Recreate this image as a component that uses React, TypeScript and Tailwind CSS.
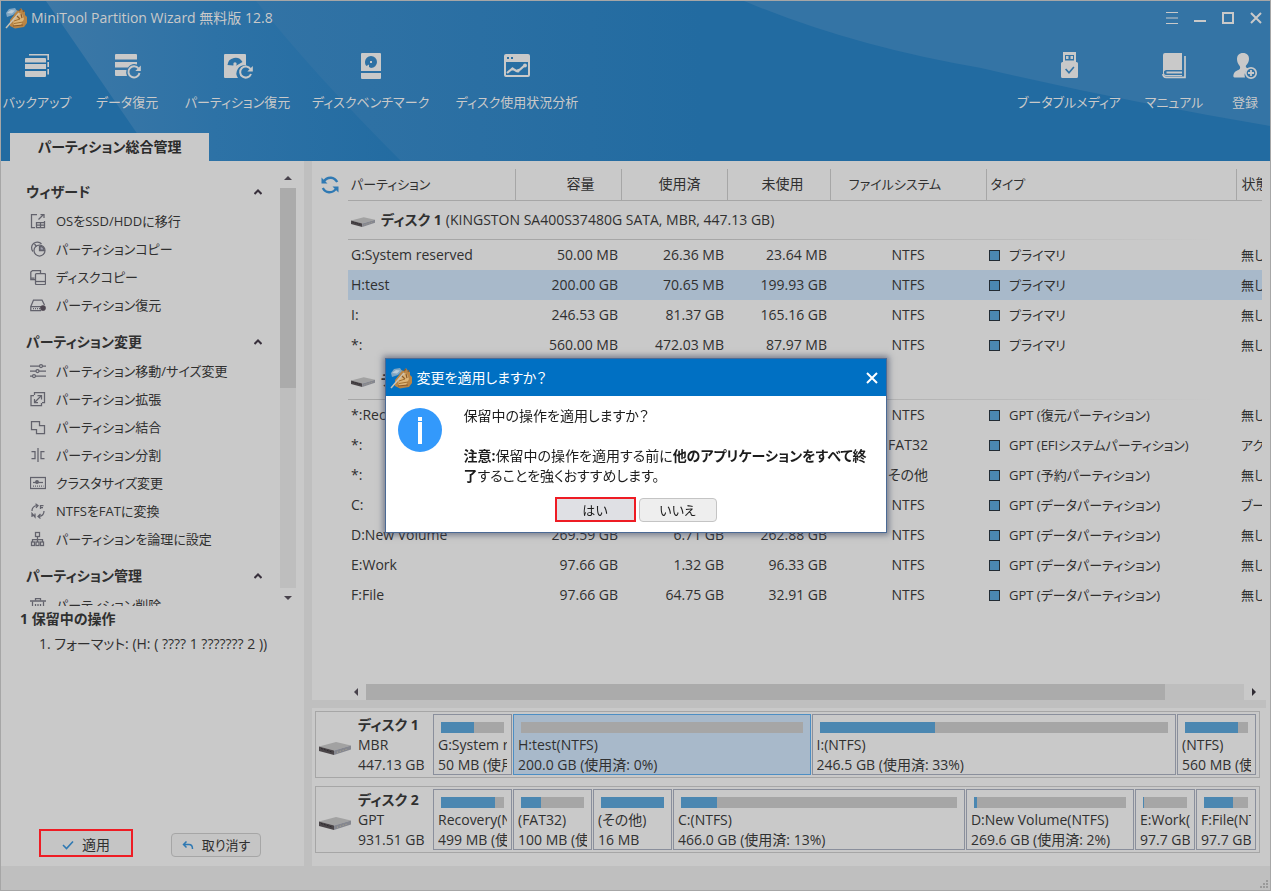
import React from "react";

type IconName =
  | "migrate" | "pie" | "diskcopy" | "recover" | "sliders" | "extend" | "merge"
  | "split" | "cluster" | "convert" | "logical" | "trash";

const sideIcons: Record<IconName, React.ReactNode> = {
  migrate: (
    <>
      <path d="M7 1.500H1.500v13H5M14.500 8v6.500H6.500V9.500h8M10.500 9.500v5M6.500 12h8M8.500 6.500l5-5" />
      <path d="M10.500 1.500h3.500V5" />
    </>
  ),
  pie: (
    <>
      <circle cx="9.500" cy="9.500" r="5.500" />
      <path d="M3 10.500A5 5 0 1 1 11.500 3M9.500 5v4.500H15M4.500 3l2 2.500" />
      <path d="M10 5.500A4 4 0 0 1 14 9h-4z" fill="#a3a3b0" />
    </>
  ),
  diskcopy: (
    <>
      <path d="M10.500 4V1.500h-8L.8 3v7.500H5M1 9h3.500" />
      <rect x="5.500" y="4.500" width="10" height="11" rx="1" />
      <path d="M5.500 12.500h10" />
    </>
  ),
  recover: (
    <>
      <path d="M.8 9.500L3.500 3h8.500l2.500 5M.8 9v4.500H11M.8 9.500h11" />
      <path d="M3 11.500h7" strokeDasharray="1 1" />
      <circle cx="13" cy="11" r="2.200" fill="#4e4650" stroke="#4e4650" />
    </>
  ),
  sliders: (
    <>
      <path d="M0 3h9.500M12.500 3H16M0 8h6M9 8h7M0 13h2.500M5.500 13H16" />
      <circle cx="11" cy="3" r="1.500" />
      <circle cx="7.500" cy="8" r="1.500" />
      <circle cx="4" cy="13" r="1.500" />
    </>
  ),
  extend: (
    <>
      <path d="M4.500 4V1.500h10v10H12M4 4.500H1v10h10.500V12M5 11l6-6" />
      <path d="M7.500 4.500h4v4M4.500 8v3.500H8" />
    </>
  ),
  merge: <path d="M1.500 2.500h8v4h5v8h-8v-4h-5z" />,
  split: <path d="M8 1v14M1.500 4.500H5v7H1.500M14.500 4.500H11v7h3.500" />,
  cluster: (
    <>
      <rect x=".5" y="2.500" width="15" height="11" />
      <path d="M3 7.500h10" />
      <path d="M3 11h10.500" strokeDasharray="1 1" />
      <circle cx="7" cy="7" r="1.300" fill="#66666f" />
    </>
  ),
  convert: (
    <>
      <path d="M2 8c0-3 1.500-5 5-5.500M5.500.8L8 2.500 6 4.800M14 8c0 3-1.500 5-5 5.500M10.500 11L8 13.500l2.500 2" />
      <path d="M10.500 6V2.500h3M10.500 4.500h2.500M2 14v-3.500l3 3.500v-3.500" />
    </>
  ),
  logical: (
    <>
      <rect x="5.500" y="1.500" width="4" height="4" />
      <path d="M7.500 6v5M2.500 11V8.500h10V11" />
      <rect x="1.500" y="11" width="3" height="3.500" />
      <rect x="6" y="11" width="3" height="3.500" />
      <rect x="10.500" y="11" width="3" height="3.500" />
    </>
  ),
  trash: (
    <>
      <path d="M0 4h16" strokeWidth="1.500" />
      <path d="M5.500 3.500V1.500h5v2M2.500 4.500V15h11V4.500M5.500 7v5M8 7v5M10.500 7v5" />
    </>
  ),
};

function SideIcon({ name }: { name: IconName }) {
  return (
    <svg viewBox="0 0 16 16" className="size-4 shrink-0" fill="none" stroke="#62626c" strokeWidth="1.250" aria-hidden="true">
      {sideIcons[name]}
    </svg>
  );
}

const sections: { title: string; items: [IconName, string][] }[] = [
  {
    title: "ウィザード",
    items: [
      ["migrate", "OSをSSD/HDDに移行"],
      ["pie", "パーティションコピー"],
      ["diskcopy", "ディスクコピー"],
      ["recover", "パーティション復元"],
    ],
  },
  {
    title: "パーティション変更",
    items: [
      ["sliders", "パーティション移動/サイズ変更"],
      ["extend", "パーティション拡張"],
      ["merge", "パーティション結合"],
      ["split", "パーティション分割"],
      ["cluster", "クラスタサイズ変更"],
      ["convert", "NTFSをFATに変換"],
      ["logical", "パーティションを論理に設定"],
    ],
  },
  { title: "パーティション管理", items: [["trash", "パーティション削除"]] },
];

type Row = [string, string, string, string, string, string, string];

const disk1: Row[] = [
  ["G:System reserved", "50.00 MB", "26.36 MB", "23.64 MB", "NTFS", "プライマリ", "無し"],
  ["H:test", "200.00 GB", "70.65 MB", "199.93 GB", "NTFS", "プライマリ", "無し"],
  ["I:", "246.53 GB", "81.37 GB", "165.16 GB", "NTFS", "プライマリ", "無し"],
  ["*:", "560.00 MB", "472.03 MB", "87.97 MB", "NTFS", "プライマリ", "無し"],
];

const disk2: Row[] = [
  ["*:Recovery", "499.00 MB", "433.00 MB", "66.00 MB", "NTFS", "GPT (復元パーティション)", "無し"],
  ["*:", "100.00 MB", "32.00 MB", "68.00 MB", "FAT32", "GPT (EFIシステムパーティション)", "アクティブ"],
  ["*:", "16.00 MB", "16.00 MB", "0 B", "その他", "GPT (予約パーティション)", "無し"],
  ["C:", "466.00 GB", "60.00 GB", "406.00 GB", "NTFS", "GPT (データパーティション)", "ブート"],
  ["D:New Volume", "269.59 GB", "6.71 GB", "262.88 GB", "NTFS", "GPT (データパーティション)", "無し"],
  ["E:Work", "97.66 GB", "1.32 GB", "96.33 GB", "NTFS", "GPT (データパーティション)", "無し"],
  ["F:File", "97.66 GB", "64.75 GB", "32.91 GB", "NTFS", "GPT (データパーティション)", "無し"],
];

function DiskIcon({ className }: { className: string }) {
  return (
    <svg viewBox="0 0 32 13" className={className} aria-hidden="true">
      <path d="M0 4.500L17 0l15 3.500-17 5z" fill="#a2a2a2" />
      <path d="M0 4.500l15 4V13L0 9z" fill="#4a4548" />
      <path d="M15 8.500l17-5v4L15 13z" fill="#85878f" />
      <path d="M2 6.500l11 3.500" stroke="#2f2c30" strokeWidth="1" strokeDasharray="2 1" />
      <path d="M18 10.300l11-3.500" stroke="#b0a890" strokeWidth="1" strokeDasharray="1 2" />
    </svg>
  );
}

function Logo({ className }: { className: string }) {
  return (
    <svg viewBox="0 0 22 22" className={className} aria-hidden="true">
      <path d="M5 13l4-5 2-5 3 1 2-3 2 3 2 1v3l2 2v6l-3 4-9 1.500-5-2.500z" fill="#b98545" />
      <path d="M8 12l4-4 2-2 3 1 2 5-3 6-7 1z" fill="#dcb477" />
      <path d="M1 6l3-4 6-1 2 3-4 4-6 2z" fill="#7fa6c4" />
      <path d="M2 6l4-3 4 .5-3 3z" fill="#b8cbd9" />
      <path d="M1 21L14 6" stroke="#c9c2b4" strokeWidth="1.500" />
      <path d="M14 4l2-2M18 5l1-2M8 19l10-1M12 9l3 3M16 7l1 4" stroke="#8a5a2b" strokeWidth="1.200" />
      <path d="M9 14l6-2M9 16.500l9-1.500" stroke="#a3702f" strokeWidth="1" />
    </svg>
  );
}

const tools: { label: string; box: string; icon: React.ReactNode }[] = [
  {
    label: "バックアップ",
    box: "w-16",
    icon: (
      <>
        <path d="M4 8h19a1 1 0 0 1 1 1v3.500H3V9a1 1 0 0 1 1-1zM3 14h21v5H3zM3 21h21v5a1 1 0 0 1-1 1H4a1 1 0 0 1-1-1z" transform="translate(1 -1)" />
        <path d="M8 3.700h19.200V9M27.200 11v5M27.200 18v5.500" fill="none" stroke="#c9c9c9" strokeWidth="1.600" />
      </>
    ),
  },
  {
    label: "データ復元",
    box: "w-[66px]",
    icon: (
      <>
        <path d="M5 3h20a1 1 0 0 1 1 1v4.500H4V4a1 1 0 0 1 1-1zM4 11h22v2.500a8 8 0 0 0-9 3H4zM4 19h11.500a8 8 0 0 0 .5 6H5a1 1 0 0 1-1-1z" />
        <path d="M27.500 17.500A5.600 5.600 0 1 0 28.500 22" fill="none" stroke="#c9c9c9" strokeWidth="2" />
        <path d="M29.800 14.500V20h-5.500z" />
      </>
    ),
  },
  {
    label: "パーティション復元",
    box: "w-[105px]",
    icon: (
      <>
        <path fillRule="evenodd" d="M3 3h20a1 1 0 0 1 1 1v10.500a8 8 0 0 0-8 12.500H3a1 1 0 0 1-1-1V4a1 1 0 0 1 1-1zM5.500 14a8 8 0 0 1 15-3l-6 3.500a2.500 2.500 0 0 0-3.500 0z" />
        <circle cx="13" cy="13" r="1.700" />
        <path d="M28.500 18A5.600 5.600 0 1 0 29 23" fill="none" stroke="#c9c9c9" strokeWidth="2" />
        <path d="M30.800 15v5.500h-5.500z" />
      </>
    ),
  },
  {
    label: "ディスクベンチマーク",
    box: "w-[111px]",
    icon: (
      <>
        <path fillRule="evenodd" d="M7 2h18a1 1 0 0 1 1 1v17H6V3a1 1 0 0 1 1-1zm9 3a6 6 0 0 0-6 6c0 2 .5 3 1.500 4l2.500-1.500V16l2 1a6 6 0 0 0 0-12z" />
        <rect x="15" y="10" width="2" height="2" />
        <path d="M6 22h20v5a1 1 0 0 1-1 1H7a1 1 0 0 1-1-1z" />
      </>
    ),
  },
  {
    label: "ディスク使用状況分析",
    box: "w-[132px]",
    icon: (
      <>
        <path fillRule="evenodd" d="M5 3h22a2 2 0 0 1 2 2v19a2 2 0 0 1-2 2H5a2 2 0 0 1-2-2V5a2 2 0 0 1 2-2zM5 11v13h22V11zM6 6v2h2V6zm4 0v2h2V6z" />
        <path d="M6 22l5.500-4.500 4 2.500 3.500-1.500 5-4.500" fill="none" stroke="#c9c9c9" strokeWidth="2.200" />
        <circle cx="11.500" cy="18" r="1.600" />
        <circle cx="17" cy="20" r="1.600" />
        <circle cx="24" cy="14.500" r="1.900" />
      </>
    ),
  },
];

const rightTools: { label: string; box: string; icon: React.ReactNode }[] = [
  {
    label: "ブータブルメディア",
    box: "w-[98px]",
    icon: (
      <>
        <path fillRule="evenodd" d="M10 1h13v10H10zM12 4v5.500h9V4zM13 5v3h2.500V5zm4.500 0v3H20V5z" />
        <path fillRule="evenodd" d="M8 12.500A1.500 1.500 0 0 1 9.500 11h14a1.500 1.500 0 0 1 1.500 1.500v13a1.500 1.500 0 0 1-1.500 1.500h-14A1.500 1.500 0 0 1 8 25.500zm4 6l4 4.500 5.500-6.500-1.200-1-4.300 5-2.800-3z" />
      </>
    ),
  },
  {
    label: "マニュアル",
    box: "w-14",
    icon: (
      <>
        <path fillRule="evenodd" d="M7 2h17v17H8.500A2.500 2.500 0 0 0 6 20.500V22a2 2 0 0 0 2 2h16v1H8a3 3 0 0 1-3-3V4a2 2 0 0 1 2-2z" />
        <path d="M8.500 20.500H24v2H8.500z" />
        <path d="M27 5v21.300H8A3 3 0 0 1 5 23" fill="none" stroke="#c9c9c9" strokeWidth="1.700" />
      </>
    ),
  },
  {
    label: "登録",
    box: "w-[30px]",
    icon: (
      <>
        <path d="M14 2c4 0 6 2.500 6 6 0 3-1.500 5-3 6.500-.5 1 0 2 1 2.500l2 .5a7 7 0 0 0-4 9H5.500c-1.500 0-1.500-3 0-5 1.500-2 5-2.500 5.500-4 .3-1.200 0-2-.5-2.800C9 13 8 11 8 8c0-3.500 2-6 6-6z" />
        <circle cx="22" cy="22" r="5.200" fill="none" stroke="#c9c9c9" strokeWidth="1.700" />
        <path d="M21.100 19h1.800v2.100H25v1.800h-2.100V25h-1.800v-2.100H19v-1.800h2.100z" />
      </>
    ),
  },
];

function ToolButton({ label, box, icon }: { label: string; box: string; icon: React.ReactNode }) {
  return (
    <button type="button" className={`flex shrink-0 flex-col items-center gap-[7px] ${box}`}>
      <svg viewBox="0 0 32 32" className="size-8 shrink-0" fill="#c9c9c9" aria-hidden="true">
        {icon}
      </svg>
      <span className="whitespace-nowrap text-[13px] leading-6 text-[#c9c9c9]">{label}</span>
    </button>
  );
}

function Header() {
  return (
    <header className="relative flex h-40 shrink-0 flex-col overflow-hidden bg-[#226ba1]">
      <svg className="absolute inset-0 size-full" viewBox="0 0 1269 160" preserveAspectRatio="none" aria-hidden="true">
        <defs>
          <linearGradient id="beam" x1="0" x2="1" y1="0" y2="0">
            <stop offset="0" stopColor="#3d78a6" />
            <stop offset="0.450" stopColor="#2d72a6" />
            <stop offset="1" stopColor="#226ba1" />
          </linearGradient>
          <linearGradient id="beam2" x1="0" x2="1" y1="0" y2="0">
            <stop offset="0" stopColor="#3273a5" />
            <stop offset="1" stopColor="#226ba1" />
          </linearGradient>
        </defs>
        <path d="M45 0H420V160H155z" fill="url(#beam)" />
        <path d="M255 0H700V160H400Q310 70 255 0z" fill="url(#beam2)" />
        <path d="M743 0H1269V125Q1120 100 980 67Q850 45 743 0z" fill="#3474a5" />
      </svg>
      <div className="relative flex h-[33px] items-center pl-1 text-[#c9c9c9]">
        <Logo className="mr-1 size-[22px]" />
        <h1>MiniTool Partition Wizard 無料版 12.8</h1>
        <div className="ml-auto flex items-center">
          {[
            ["メニュー", "M2 2.500h12M2 8h12M2 13.500h12", "1"],
            ["最小化", "M2 11h12", "2"],
            ["最大化", "M3 3h10v10H3z", "2"],
            ["閉じる", "M3 3l10 10M13 3L3 13", "2"],
          ].map(([label, d, w]) => (
            <button key={label} type="button" aria-label={label} className="flex w-7 justify-center">
              <svg viewBox="0 0 16 16" className="size-4" fill="none" stroke="#c9c9c9" strokeWidth={w}>
                <path d={d} />
              </svg>
            </button>
          ))}
        </div>
      </div>
      <nav className="relative flex gap-[25px] pl-1 pr-[10px] pt-[17px]">
        {tools.map((t) => <ToolButton key={t.label} {...t} />)}
        <div className="ml-auto flex gap-[28px]">
          {rightTools.map((t) => <ToolButton key={t.label} {...t} />)}
        </div>
      </nav>
      <button type="button" className="relative ml-[9px] mt-auto h-7 w-[199px] shrink-0 bg-[#c9c9c9] font-bold text-[#2b2b2b]">
        パーティション総合管理
      </button>
    </header>
  );
}

function Sidebar() {
  return (
    <aside className="flex w-[303px] shrink-0 flex-col">
      <div className="flex min-h-0 flex-1">
        <div className="flex min-w-0 flex-1 flex-col gap-2 overflow-hidden pl-[25px] pt-4">
          {sections.map((s) => (
            <section key={s.title} className="shrink-0">
              <button type="button" className="flex h-[30px] w-full items-center justify-between pr-[18px] font-bold">
                {s.title}
                <svg viewBox="0 0 8 6" className="h-[6px] w-2" fill="none" stroke="#38303c" strokeWidth="2" aria-hidden="true">
                  <path d="M.5 5L4 1.500 7.500 5" />
                </svg>
              </button>
              <ul>
                {s.items.map(([icon, label]) => (
                  <li key={label}>
                    <a href="#" className="flex h-7 items-center gap-[10px] whitespace-nowrap pl-1 text-[13px]">
                      <SideIcon name={icon} />
                      {label}
                    </a>
                  </li>
                ))}
              </ul>
            </section>
          ))}
        </div>
        <div className="mr-2 flex w-4 shrink-0 flex-col items-center pb-[6px] pt-[15px]">
          <svg viewBox="0 0 8 4" className="h-1 w-2" fill="#48424c" aria-hidden="true"><path d="M0 4l4-4 4 4z" /></svg>
          <div className="mt-2 w-full flex-1 bg-[#bebebe]">
            <div className="h-1/2 w-full bg-[#ababab]" />
          </div>
          <svg viewBox="0 0 8 4" className="mt-2 h-1 w-2" fill="#48424c" aria-hidden="true"><path d="M0 0l4 4 4-4z" /></svg>
        </div>
      </div>
      <section className="flex h-[260px] shrink-0 flex-col pb-[9px] pl-[19px]">
        <h2 className="font-bold leading-[26px]">1 保留中の操作</h2>
        <p className="pl-[19px] leading-6">1. フォーマット: (H: ( ???? 1 ??????? 2 ))</p>
        <div className="mt-auto flex items-end gap-[38px] pl-[19px]">
          <button type="button" className="flex h-[28px] w-[94px] items-center justify-center gap-2 border-2 border-[#ee1c24] bg-[#c5c5c5] pt-1">
            <svg viewBox="0 0 12 10" className="h-[10px] w-3" fill="none" stroke="#2f79b3" strokeWidth="1.600" aria-hidden="true"><path d="M1 5l3.500 3.500L11 1.500" /></svg>
            適用
          </button>
          <button type="button" className="flex h-6 w-[90px] items-center justify-center gap-2 rounded-sm border border-[#a6a6a6] bg-[#c5c5c5] text-[13px]">
            <svg viewBox="0 0 12 9" className="h-[9px] w-3" fill="none" stroke="#2f79b3" strokeWidth="1.500" aria-hidden="true"><path d="M4.500 0.500L1.500 3.500l3 3M1.500 3.500H7q3.500 0 3.500 4.500" /></svg>
            取り消す
          </button>
        </div>
      </section>
    </aside>
  );
}

function DiskRow({ name, info }: { name: string; info: string }) {
  return (
    <tr className="h-10">
      <th colSpan={7} scope="rowgroup" className="p-0 text-left font-normal">
        <div className="flex h-[38px] items-center pl-[3px]">
          <DiskIcon className="mr-[6px] mt-1 h-[10px] w-6" />
          <b className="mr-1">{name}</b> {info}
        </div>
        <div className="h-px bg-linear-to-r from-[#a6a6a6] from-40% to-transparent to-95%" />
      </th>
    </tr>
  );
}

function PartitionRow({ row, selected }: { row: Row; selected?: boolean }) {
  return (
    <tr className={`h-[30px] whitespace-nowrap ${selected ? "bg-[#a8b9ca]" : ""}`}>
      <td className="pl-[3px]">{row[0]}</td>
      <td className="pr-[3px] text-right">{row[1]}</td>
      <td className="pr-[3px] text-right">{row[2]}</td>
      <td className="pr-[3px] text-right">{row[3]}</td>
      <td className="text-center">{row[4]}</td>
      <td className="pl-[3px] text-[13px]">
        <span className="flex items-center">
          <i className="mr-[9px] size-[11px] border border-[#222b33] bg-[#4b87b1]" />
          {row[5]}
        </span>
      </td>
      <td className="overflow-hidden pl-[5px] text-[13px]">{row[6]}</td>
    </tr>
  );
}

function PartitionTable() {
  const cell = "border-r border-[#a6a6a6]";
  return (
    <div className="flex min-h-0 flex-1 flex-col pr-2">
      <div className="flex min-h-0 flex-1 overflow-hidden pt-2">
        <button type="button" aria-label="更新" className="flex h-8 w-9 shrink-0 items-center justify-center">
          <svg viewBox="0 0 20 18" className="h-[18px] w-5" fill="none" stroke="#2f79b3" strokeWidth="2.400" aria-hidden="true">
            <path d="M3 6.500Q6 1.500 11 1.700q4 .3 6.200 4.300M17 11.500Q14 16.500 9 16.300 5 16 2.800 12" />
            <path d="M1.500 1.500v6h6zM18.500 16.500v-6h-6z" fill="#2f79b3" stroke="none" />
          </svg>
        </button>
        <div className="min-w-0 flex-1">
          <table className="w-full table-fixed border-collapse leading-5">
            <colgroup>
              <col className="w-[167px]" />
              <col className="w-[106px]" />
              <col className="w-[106px]" />
              <col className="w-[103px]" />
              <col className="w-[156px]" />
              <col />
              <col className="w-[26px]" />
            </colgroup>
            <thead>
              <tr className="h-[31px] whitespace-nowrap border-b border-[#a6a6a6] [&>th]:font-normal">
                <th className={`${cell} pl-[3px] text-left text-[13px]`}>パーティション</th>
                <th className={`${cell} pr-[26px] text-right`}>容量</th>
                <th className={`${cell} pr-[26px] text-right`}>使用済</th>
                <th className={`${cell} pr-[26px] text-right`}>未使用</th>
                <th className={`${cell} pr-[26px] text-[13px]`}>ファイルシステム</th>
                <th className={`${cell} pl-1 text-left text-[13px]`}>タイプ</th>
                <th className="overflow-hidden pl-[5px] text-left">状態</th>
              </tr>
            </thead>
            <tbody>
              <DiskRow name="ディスク 1" info="(KINGSTON SA400S37480G SATA, MBR, 447.13 GB)" />
              {disk1.map((r, i) => <PartitionRow key={i} row={r} selected={i === 1} />)}
            </tbody>
            <tbody>
              <DiskRow name="ディスク 2" info="(ST1000DM010-2EP102 SATA, GPT, 931.51 GB)" />
              {disk2.map((r, i) => <PartitionRow key={i} row={r} />)}
            </tbody>
          </table>
        </div>
      </div>
      <div className="flex h-4 shrink-0 items-center pl-[42px] pr-[6px]">
        <svg viewBox="0 0 4 8" className="h-2 w-1" fill="#48424c" aria-hidden="true"><path d="M4 0L0 4l4 4z" /></svg>
        <div className="mx-2 h-full flex-1 bg-[#bebebe]">
          <div className="h-full w-[91%] bg-[#ababab]" />
        </div>
        <svg viewBox="0 0 4 8" className="h-2 w-1" fill="#302c34" aria-hidden="true"><path d="M0 0l4 4-4 4z" /></svg>
      </div>
    </div>
  );
}

type Segment = { name: string; size: string; used: number; box: string; selected?: boolean };

const maps: { name: string; kind: string; total: string; segments: Segment[] }[] = [
  {
    name: "ディスク 1",
    kind: "MBR",
    total: "447.13 GB",
    segments: [
      { name: "G:System reserved(NTFS)", size: "50 MB (使用済: 52%)", used: 52, box: "w-[79px]" },
      { name: "H:test(NTFS)", size: "200.0 GB (使用済: 0%)", used: 0, box: "grow-[297] basis-0", selected: true },
      { name: "I:(NTFS)", size: "246.5 GB (使用済: 33%)", used: 33, box: "grow-[366] basis-0" },
      { name: "(NTFS)", size: "560 MB (使用済: 84%)", used: 84, box: "w-[79px]" },
    ],
  },
  {
    name: "ディスク 2",
    kind: "GPT",
    total: "931.51 GB",
    segments: [
      { name: "Recovery(NTFS)", size: "499 MB (使用済: 86%)", used: 86, box: "w-[79px]" },
      { name: "(FAT32)", size: "100 MB (使用済: 32%)", used: 32, box: "w-[79px]" },
      { name: "(その他)", size: "16 MB", used: 100, box: "w-[79px]" },
      { name: "C:(NTFS)", size: "466.0 GB (使用済: 13%)", used: 13, box: "grow-[296] basis-0" },
      { name: "D:New Volume(NTFS)", size: "269.6 GB (使用済: 2%)", used: 2, box: "grow-[166] basis-0" },
      { name: "E:Work(NTFS)", size: "97.7 GB (使用済: 1%)", used: 1, box: "w-[60px]" },
      { name: "F:File(NTFS)", size: "97.7 GB (使用済: 66%)", used: 66, box: "w-[60px]" },
    ],
  },
];

function DiskMap({ name, kind, total, segments }: (typeof maps)[number]) {
  return (
    <div className="flex h-[67px] border border-[#a6a6a6] py-[2px] pl-[3px] pr-[3px]">
      <div className="flex w-[114px] shrink-0 items-center">
        <DiskIcon className="mr-[7px] mt-[7px] h-[13px] w-8 shrink-0" />
        <div className="whitespace-nowrap leading-5">
          <div className="font-bold">{name}</div>
          <div>{kind}</div>
          <div>{total}</div>
        </div>
      </div>
      <div className="flex min-w-0 flex-1 gap-px">
        {segments.map((s) => (
          <button
            key={s.name}
            type="button"
            className={`flex min-w-0 flex-col overflow-hidden border px-1 pt-[7px] text-left ${s.box} ${s.selected ? "border-[#4c8ec4] bg-[#a8b9ca]" : "border-[#8a8f9c]"}`}
          >
            <span className="mx-[3px] mb-[2px] flex h-[11px] shrink-0 self-stretch bg-[#a6a6a6]">
              <span className="bg-[#4b87b1]" style={{ width: `${s.used}%` }} />
            </span>
            <span className="w-full overflow-hidden whitespace-nowrap leading-5">{s.name}</span>
            <span className="w-full overflow-hidden whitespace-nowrap leading-5">{s.size}</span>
          </button>
        ))}
      </div>
    </div>
  );
}

function ApplyDialog() {
  return (
    <div className="fixed inset-0 grid place-items-center">
      <div
        role="dialog"
        aria-modal="true"
        aria-labelledby="apply-title"
        className="w-[502px] border border-[#4b6a95] bg-white pb-[10px] text-[#1c1c1c] shadow-[0_0_6px_2px_rgba(50,60,90,0.55)]"
      >
        <div className="flex h-[37px] items-center bg-[#0070c3] pl-1 pr-2 text-white">
          <Logo className="mr-[5px] size-[22px]" />
          <h2 id="apply-title">変更を適用しますか？</h2>
          <button type="button" aria-label="閉じる" className="ml-auto">
            <svg viewBox="0 0 12 12" className="size-3" fill="none" stroke="#fff" strokeWidth="2"><path d="M1 1l10 10M11 1L1 11" /></svg>
          </button>
        </div>
        <div className="flex pl-3 pt-[10px]">
          <svg viewBox="0 0 44 44" className="mt-[2px] size-11 shrink-0" aria-hidden="true">
            <circle cx="22" cy="22" r="22" fill="#3399fb" />
            <path d="M20 9h4v4h-4zM20 14h4v22h-4z" fill="#fff" />
          </svg>
          <p className="h-[91px] whitespace-nowrap pl-[22px] leading-5">
            保留中の操作を適用しますか？
            <br />
            <br />
            <b>注意:</b>保留中の操作を適用する前に<b>他のアプリケーションをすべて終</b>
            <br />
            <b>了</b>することを強くおすすめします。
          </p>
        </div>
        <div className="flex items-center justify-center gap-[3px]">
          <button type="button" className="h-[25px] w-[81px] border-2 border-[#ee1c24] bg-[#dfe0e4] text-[13px] leading-5">はい</button>
          <button type="button" className="h-6 w-[78px] rounded-sm border border-[#c4c4c4] bg-[#eeeeee] text-[13px] leading-5">いいえ</button>
        </div>
      </div>
    </div>
  );
}

export default function App() {
  return (
    <div className="flex h-screen flex-col border border-[#a6a6a6] bg-[#c9c9c9] font-['Open_Sans','Noto_Sans_CJK_JP',sans-serif] text-sm text-[#303030] [font-feature-settings:'palt']">
      <Header />
      <main className="flex min-h-0 flex-1">
        <Sidebar />
        <div className="w-2 shrink-0 bg-[#bfbfbf]" />
        <div className="flex min-w-0 flex-1 flex-col">
          <PartitionTable />
          <div className="mr-1 h-2 shrink-0 bg-[#bfbfbf]" />
          <div className="flex shrink-0 flex-col gap-2 px-[3px] pb-[13px] pr-[10px] pt-[3px]">
            {maps.map((m) => <DiskMap key={m.name} {...m} />)}
          </div>
        </div>
      </main>
      <footer className="flex h-6 shrink-0 items-end justify-end bg-[#bfbfbf] p-[2px]">
        <svg viewBox="0 0 8 8" className="size-2" fill="#9a9a9a" aria-hidden="true">
          <path d="M6 0h2v2H6zM3 3h2v2H3zM6 3h2v2H6zM0 6h2v2H0zM3 6h2v2H3zM6 6h2v2H6z" />
        </svg>
      </footer>
      <ApplyDialog />
    </div>
  );
}
